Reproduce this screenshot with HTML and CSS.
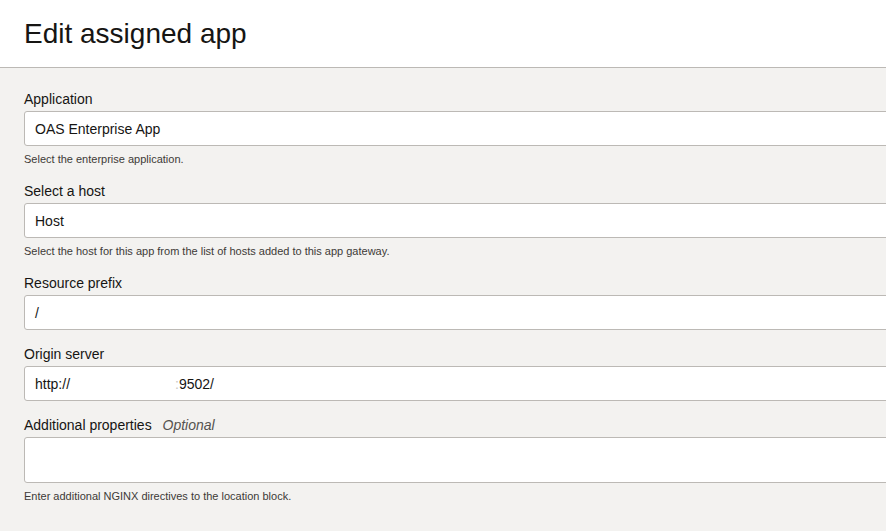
FILE: index.html
```html
<!DOCTYPE html>
<html lang="en">
<head>
<meta charset="utf-8">
<title>Edit assigned app</title>
<link rel="stylesheet" href="styles.css">
</head>
<body>
<header class="header">
  <h1 class="title">Edit assigned app</h1>
</header>
<main class="form">
  <div class="field">
    <div class="label">Application</div>
    <div class="input" role="textbox">OAS Enterprise App</div>
    <div class="help">Select the enterprise application.</div>
  </div>
  <div class="field">
    <div class="label">Select a host</div>
    <div class="input" role="textbox">Host</div>
    <div class="help">Select the host for this app from the list of hosts added to this app gateway.</div>
  </div>
  <div class="field">
    <div class="label">Resource prefix</div>
    <div class="input" role="textbox">/</div>
  </div>
  <div class="field">
    <div class="label">Origin server</div>
    <div class="input" role="textbox">http://<span class="redacted"></span><span class="faint">:</span>9502/</div>
  </div>
  <div class="field">
    <div class="label">Additional properties <span class="optional">Optional</span></div>
    <div class="input textarea" role="textbox"></div>
    <div class="help">Enter additional NGINX directives to the location block.</div>
  </div>
</main>
</body>
</html>
```

FILE: styles.css
```css
html, body {
  margin: 0;
  padding: 0;
  overflow: hidden;
}
body {
  background: #f3f2f0;
  color: #161513;
  font-family: "Liberation Sans", Arial, sans-serif;
  width: 886px;
  height: 531px;
}
.header {
  background: #ffffff;
  height: 67px;
  border-bottom: 1px solid #bcb9b5;
  box-sizing: content-box;
  padding: 0 24px;
}
.title {
  margin: 0;
  padding-top: 17px;
  font-size: 28px;
  line-height: 34px;
  font-weight: normal;
  color: #161513;
}
.form {
  padding: 21px 0 0 24px;
  display: flex;
  flex-direction: column;
  gap: 14px;
  width: 900px;
}
.field {
  display: flex;
  flex-direction: column;
}
.label {
  font-size: 14px;
  line-height: 20px;
  margin-bottom: 2px;
  color: #161513;
}
.optional {
  font-style: italic;
  color: #55524f;
  margin-left: 7px;
}
.input {
  box-sizing: border-box;
  height: 35px;
  background: #ffffff;
  border: 1px solid #bcb9b5;
  border-radius: 3px;
  padding: 0 10px;
  display: flex;
  align-items: center;
  font-size: 14px;
  color: #161513;
  white-space: pre;
}
.textarea {
  height: 46px;
}
.redacted {
  display: inline-block;
  width: 105px;
}
.faint {
  color: #c9c7c4;
}
.help {
  font-size: 11px;
  line-height: 16px;
  margin-top: 5px;
  color: #3d3a37;
}
```
